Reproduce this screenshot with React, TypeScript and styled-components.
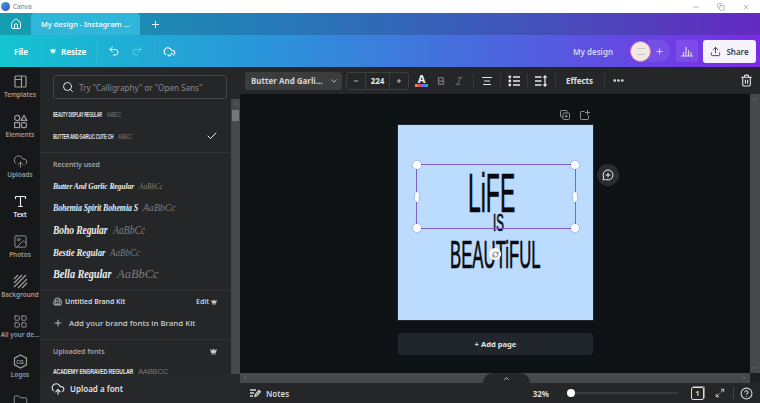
import React from "react";
import styled, { createGlobalStyle } from "styled-components";
import {
  Home, Plus, X, Undo2, Redo2, CloudCheck, Crown, Search, CloudUpload, Type,
  Image, LayoutGrid, MoreHorizontal, Trash2, Upload, Check, Minus, Copy, ChevronDown,
  ChevronUp, ChevronLeft, ChevronRight, Bold, Italic, AlignCenter, Maximize2, HelpCircle, Folder, Building2, RefreshCw,
  MessageCirclePlus,
} from "lucide-react";

const Global = createGlobalStyle`
  html, body { margin: 0; padding: 0; background: #fff; }
  * { box-sizing: border-box; }
  body { font-family: "Noto Sans", "Open Sans", sans-serif; width: 760px; height: 403px; overflow: hidden; }
`;

const Shell = styled.div`
  width: 760px; height: 403px; display: flex; flex-direction: column; overflow: hidden;
`;
const TitleBar = styled.div`
  height: 13px; background: #fff; display: flex; align-items: center; padding: 0 10px 0 1px; gap: 3px;
  font-size: 6.5px; color: #777;
`;
const AppDot = styled.span`
  width: 9px; height: 9px; border-radius: 50%;
  background: linear-gradient(135deg, #25b6d8, #5b3ad0);
`;
const WindowControls = styled.div`
  margin-left: auto; display: flex; align-items: center; gap: 17px; color: #999;
`;
const Header = styled.div`
  background: linear-gradient(90deg, #14c4d0 0%, #2a95da 35%, #4f62de 68%, #7d2ae8 100%);
`;
const TabRow = styled.div`
  height: 22px; display: flex; align-items: stretch; background: rgba(20, 40, 70, 0.24); color: #fff;
`;
const HomeTab = styled.div`
  width: 31px; display: flex; align-items: center; justify-content: center;
`;
const ActiveTab = styled.div`
  width: 109px; display: flex; align-items: center; justify-content: space-between; padding: 0 8px 0 10px;
  background: #2fb6d8; border-radius: 4px 4px 0 0; font-size: 7.4px; font-weight: 600; color: #e9fbff; white-space: nowrap;
`;
const NewTab = styled.div`
  width: 30px; display: flex; align-items: center; justify-content: center;
`;
const ActionRow = styled.div`
  height: 32px; display: flex; align-items: center; color: #fff; font-size: 8px; font-weight: 700;
`;
const FileLabel = styled.span`
  margin-left: 14px; width: 36px;
`;
const ResizeLabel = styled.span`
  display: flex; align-items: center; gap: 5px; width: 46px;
`;
const ActionDivider = styled.span<{ $after: number }>`
  width: 1px; height: 24px; background: rgba(255, 255, 255, 0.07); margin-right: ${(p) => p.$after}px;
`;
const HistoryButton = styled.span<{ $dim?: boolean }>`
  display: flex; margin-right: 11px; color: ${(p) => (p.$dim ? "rgba(255,255,255,.35)" : "#fff")};
`;
const DesignName = styled.span`
  margin-left: auto; margin-right: 17px; color: #d5d4f7; font-weight: 600; font-size: 8px;
`;
const Avatar = styled.span`
  width: 21px; height: 21px; border-radius: 50%; background: #efe9e6; border: 1.5px solid #f0739a;
  display: flex; align-items: center; justify-content: center; color: #bbb; position: relative; z-index: 1;
`;
const AvatarGlyph = styled.span`
  width: 8px; height: 7px; border-top: 1px solid #c9c4c2; border-bottom: 1px solid #c9c4c2;
`;
const AddMember = styled.span`
  width: 22px; height: 22px; margin-left: -3px; margin-right: 6px; border-radius: 0 50% 50% 0;
  background: rgba(255, 255, 255, 0.08); display: flex; align-items: center; justify-content: center; color: #eee;
`;
const Insights = styled.span`
  width: 22px; height: 22px; border-radius: 3px; background: rgba(255, 255, 255, 0.09); color: #ddd;
  display: flex; align-items: center; justify-content: center; margin-right: 5px;
`;
const ShareButton = styled.span`
  width: 53px; height: 23px; margin-right: 4px; border-radius: 3px; background: #f7f3fc; color: #3a3f48;
  display: flex; align-items: center; justify-content: center; gap: 5px; font-size: 8px; font-weight: 600;
`;
const Main = styled.div`
  flex: 1; display: flex; min-height: 0;
`;
const Rail = styled.div`
  width: 40px; background: #17181a; padding-top: 7px; display: flex; flex-direction: column; overflow: hidden; flex: none;
`;
const RailItem = styled.div<{ $active?: boolean }>`
  height: 40px; flex: none; display: flex; flex-direction: column; align-items: center; gap: 2px;
  color: ${(p) => (p.$active ? "#f0f0f0" : "#9c9d9f")};
  font-size: 6.4px; font-weight: 600; line-height: 8px; white-space: nowrap;
`;
const Panel = styled.div`
  width: 200px; flex: none; background: #252627; display: flex; flex-direction: column; position: relative; overflow: hidden;
`;
const SearchBox = styled.div`
  height: 24px; margin: 8px 13px 0; width: 174px; flex: none; border: 1px solid #45474a; border-radius: 3px;
  display: flex; align-items: center; gap: 5px; padding-left: 8px; color: #e8e8e8;
`;
const SearchHint = styled.span`
  color: #87888b; font-size: 8.1px; white-space: nowrap;
`;
const PanelBody = styled.div`
  flex: 1; display: flex; min-height: 0;
`;
const FontList = styled.div`
  flex: 1; min-width: 0; display: flex; flex-direction: column;
`;
const ScrollTrack = styled.div`
  width: 9px; flex: none; background: #47484a; display: flex; flex-direction: column; align-items: center;
  color: #8a8a8a; padding-top: 2px;
`;
const ScrollThumb = styled.div`
  width: 7px; height: 11px; background: #77787a; margin-top: 3px;
`;
const FontRow = styled.div<{ $h: number; $pt?: number; $pb?: number }>`
  height: ${(p) => p.$h}px; flex: none; display: flex; align-items: center; gap: 5px; padding: ${(p) => p.$pt ?? 0}px 14px ${(p) => p.$pb ?? 0}px 13px;
  white-space: nowrap;
`;
const Squeezed = styled.span<{ $w: number; $sx: number }>`
  display: inline-block; flex: none; width: ${(p) => p.$w}px; transform: scaleX(${(p) => p.$sx}); transform-origin: left center;
  white-space: nowrap;
`;
const CapsName = styled(Squeezed)<{ $size: number }>`
  font-family: "Liberation Sans", sans-serif; font-weight: 700; font-size: ${(p) => p.$size}px;
  letter-spacing: -0.25px; color: #e2e2e2;
`;
const CapsPreview = styled(CapsName)`
  color: #77787a; font-weight: 400;
`;
const ScriptName = styled(Squeezed)<{ $size: number }>`
  font-family: "Liberation Serif", serif; font-style: italic; font-weight: 700; font-size: ${(p) => p.$size}px;
  color: #ececec; letter-spacing: -0.1px;
`;
const ScriptPreview = styled(Squeezed)<{ $size: number }>`
  font-family: "Liberation Serif", serif; font-style: italic; font-size: ${(p) => p.$size}px; color: #7b7c7e;
`;
const CheckMark = styled.span`
  margin-left: auto; margin-right: -1px; display: flex; color: #eee;
`;
const Divider = styled.div`
  height: 1px; flex: none; background: #323335;
`;
const SectionRow = styled.div<{ $h: number }>`
  height: ${(p) => p.$h}px; flex: none; display: flex; align-items: center; gap: 3px; padding: 0 14px 0 13px;
  font-size: 6.9px; font-weight: 600; color: #a4a5a7;
`;
const BrandTitle = styled.span`
  color: #dcdcdc;
`;
const EditLabel = styled.span`
  margin-left: auto; display: flex; align-items: center; gap: 2px; color: #cfcfcf;
`;
const AddRow = styled.div`
  height: 27px; flex: none; display: flex; align-items: center; gap: 6px; padding: 0 0 5px 13px; font-size: 7.9px;
  font-weight: 500; color: #cfd0d1; white-space: nowrap;
`;
const UploadBar = styled.div`
  position: absolute; left: 0; right: 0; bottom: 0; height: 29px; background: #27282a; display: flex;
  align-items: center; gap: 5px; padding-left: 11px; color: #e2e2e2; font-size: 8px; font-weight: 600;
`;
const Editor = styled.div`
  flex: 1; min-width: 0; display: flex; flex-direction: column; background: #0e1215;
`;
const FormatBar = styled.div`
  height: 27px; flex: none; background: #252627; display: flex; align-items: center; padding: 0 7px 0 5px; color: #e6e6e6;
`;
const FontPicker = styled.div`
  width: 97px; height: 18px; background: #3b3c3e; border-radius: 3px; display: flex; align-items: center;
  justify-content: space-between; padding: 0 3px 0 6px; font-size: 8px; font-weight: 700; color: #d5d5d5;
`;
const SizeStepper = styled.div`
  margin-left: 4px; width: 63px; height: 18px; border: 1px solid #3d3e40; border-radius: 3px; display: grid;
  grid-template-columns: 18px 1fr 18px; font-size: 8px; font-weight: 700;
`;
const StepCell = styled.span<{ $mid?: boolean }>`
  display: flex; align-items: center; justify-content: center;
  ${(p) => p.$mid && "border-left: 1px solid #3d3e40; border-right: 1px solid #3d3e40;"}
`;
const ColorA = styled.span`
  margin-left: 6px; width: 13px; display: flex; flex-direction: column; align-items: center;
  font-size: 11px; font-weight: 700; line-height: 10px; color: #f2f2f2;
`;
const Rainbow = styled.span`
  width: 13px; height: 3px; border-radius: 1px;
  background: linear-gradient(90deg, #f0c02c, #e5484d, #a64de0, #3b82f6, #2ecc71);
`;
const Tool = styled.span<{ $dim?: boolean; $ml: number }>`
  display: flex; margin-left: ${(p) => p.$ml}px; color: ${(p) => (p.$dim ? "#77787a" : "#e6e6e6")};
`;
const FormatDivider = styled.span<{ $ml: number }>`
  width: 1px; height: 14px; background: #37383a; margin-left: ${(p) => p.$ml}px;
`;
const EffectsLabel = styled.span`
  margin-left: 10px; width: 27px; font-size: 8px; font-weight: 700; color: #e0e0e0; white-space: nowrap;
`;
const TrashButton = styled.span`
  margin-left: auto; display: flex;
`;
const CanvasRow = styled.div`
  flex: 1; min-height: 0; display: flex;
`;
const CanvasArea = styled.div`
  flex: 1; min-width: 0; display: flex; flex-direction: column; align-items: flex-start; padding-left: 158px; position: relative;
`;
const PageActions = styled.div`
  height: 31px; width: 195px; flex: none; display: flex; justify-content: flex-end; align-items: flex-start;
  gap: 10px; padding: 16px 3px 0 0; color: #8d8f92;
`;
const DesignPage = styled.div`
  width: 195px; height: 195px; flex: none; background: #bcdcff; position: relative; outline: 1px solid #24272b;
`;
const Lettering = styled.div<{ $x: number; $y: number; $size: number; $sx: number }>`
  position: absolute; left: ${(p) => p.$x}px; top: ${(p) => p.$y}px; font-size: ${(p) => p.$size}px;
  line-height: 0.75; color: #0a0a0e; font-family: "Liberation Sans", sans-serif; font-weight: 400; white-space: nowrap;
  -webkit-text-stroke: 0.7px #0a0a0e;
  transform: scaleX(${(p) => p.$sx}); transform-origin: left top;
`;
const Selection = styled.div`
  position: absolute; left: 18px; top: 39px; width: 160px; height: 65px; border: 1.5px solid #8261cf;
`;
const Handle = styled.span<{ $x: string; $y: string; $bar?: boolean }>`
  position: absolute; left: ${(p) => p.$x}; top: ${(p) => p.$y}; transform: translate(-50%, -50%);
  width: ${(p) => (p.$bar ? "4px" : "8px")}; height: ${(p) => (p.$bar ? "10px" : "8px")};
  border-radius: ${(p) => (p.$bar ? "2px" : "50%")}; background: #fff; box-shadow: 0 0 2px rgba(0, 0, 0, 0.35);
`;
const MoveHandle = styled.span`
  position: absolute; left: 97px; top: 129px; transform: translate(-50%, -50%); width: 12px; height: 12px;
  border-radius: 50%; background: #fff; display: flex; align-items: center; justify-content: center; color: #444;
`;
const RefreshBubble = styled.span`
  position: absolute; left: 357px; top: 70px; width: 22px; height: 22px; border-radius: 50%; background: #2b2c2e;
  display: flex; align-items: center; justify-content: center; color: #f0f0f0;
`;
const AddPage = styled.div`
  margin-top: 13px; width: 195px; height: 22px; flex: none; background: #20262b; border-radius: 3px; display: flex;
  align-items: center; justify-content: center; color: #e2e2e2; font-size: 7.6px; font-weight: 700;
`;
const VerticalTrack = styled.div`
  width: 10px; flex: none; background: #47484a; display: flex; justify-content: space-between; flex-direction: column;
  align-items: center; padding: 2px 0; color: #8c8c8c;
`;
const HorizontalTrack = styled.div`
  height: 10px; flex: none; background: #47484a; position: relative; display: flex; align-items: center;
  justify-content: space-between; color: #8c8c8c; padding-left: 2px;
`;
const TrackEnd = styled.span`
  display: flex; align-items: center; gap: 3px;
`;
const TrackCorner = styled.span`
  width: 10px; height: 10px; background: #1e1f21;
`;
const DrawerTab = styled.span`
  position: absolute; left: 243px; top: 0; width: 47px; height: 10px; background: #252627; border-radius: 10px 10px 0 0;
  display: flex; justify-content: center; color: #ddd; align-items: center;
`;
const Footer = styled.div`
  height: 20px; flex: none; background: #252627; display: flex; align-items: center; padding: 0 7px 0 9px; color: #d8d8d8;
  font-size: 8px; font-weight: 600;
`;
const NotesLabel = styled.span`
  display: flex; align-items: center; gap: 5px;
`;
const Zoom = styled.span`
  margin-left: auto; margin-right: 18px; font-weight: 700;
`;
const Slider = styled.span`
  width: 111px; height: 2px; background: #3a3b3d; position: relative; margin-right: 13px;
`;
const SliderKnob = styled.span`
  position: absolute; left: 0; top: -3px; width: 8px; height: 8px; background: #fff; border-radius: 50%;
`;
const PageCount = styled.span`
  width: 13px; height: 13px; border: 1.5px solid #ddd; border-radius: 2px; font-size: 7px; font-weight: 700;
  display: flex; align-items: center; justify-content: center; margin-right: 11px; box-shadow: 1px -1px 0 #8a8a8a;
`;
const FooterDivider = styled.span`
  width: 1px; height: 12px; background: #444; margin: 0 6px 0 8px;
`;

function TemplatesIcon() {
  return (
    <svg width="15" height="15" viewBox="0 0 15 15" fill="none" stroke="currentColor" strokeWidth="1.2">
      <rect x="2" y="2" width="11" height="11" rx="1" />
      <path d="M8.5 2v11M2 5.5h6.5" />
    </svg>
  );
}
function ElementsIcon() {
  return (
    <svg width="15" height="15" viewBox="0 0 15 15" fill="none" stroke="currentColor" strokeWidth="1.2">
      <circle cx="4.2" cy="4" r="2.6" />
      <path d="M11 1.4 13.8 6.4H8.2Z" />
      <rect x="1.6" y="8.6" width="5" height="5" />
      <rect x="8.4" y="8.6" width="5" height="5" rx="1.6" />
    </svg>
  );
}
function Hatch() {
  return (
    <svg width="15" height="15" viewBox="0 0 15 15" stroke="currentColor" strokeWidth="1.2">
      <path d="M1 5 5 1M1 9l8-8M1 13 13 1M5 14l9-9M9 14l5-5" />
    </svg>
  );
}
function LogoBadge() {
  return (
    <svg width="15" height="15" viewBox="0 0 15 15" fill="none" stroke="currentColor" strokeWidth="1.2">
      <path d="M7.5 1 13.5 4.2v6.6L7.5 14 1.5 10.8V4.2Z" />
      <text x="7.5" y="9.5" fontSize="5" textAnchor="middle" fill="currentColor" stroke="none" fontWeight="700">CO.</text>
    </svg>
  );
}
function BarsIcon() {
  return (
    <svg width="12" height="12" viewBox="0 0 12 12" stroke="currentColor" strokeWidth="1.1">
      <path d="M0 11h12M2.5 11V7M5 11V2M7.5 11V5M10 11V7" />
    </svg>
  );
}
function NotesIcon() {
  return (
    <svg width="12" height="10" viewBox="0 0 12 10" fill="none" stroke="currentColor" strokeWidth="1.3">
      <path d="M1 2h6M1 5h4M1 8h3M6 8.2l.5-2L10 2.5 11.3 3.8 7.8 7.6Z" />
    </svg>
  );
}
function BulletsIcon() {
  return (
    <svg width="12" height="12" viewBox="0 0 12 12" fill="currentColor">
      <circle cx="1.8" cy="2" r="1.4" /><circle cx="1.8" cy="6" r="1.4" /><circle cx="1.8" cy="10" r="1.4" />
      <path d="M5 1.2h7v1.5H5zM5 5.2h7v1.5H5zM5 9.2h7v1.5H5z" />
    </svg>
  );
}
function SpacingIcon() {
  return (
    <svg width="12" height="12" viewBox="0 0 12 12" fill="none" stroke="currentColor" strokeWidth="1.3">
      <path d="M0 2h6.5M0 6h6.5M0 10h6.5M10 1v10M8.4 2.6 10 1l1.6 1.6M8.4 9.4 10 11l1.6-1.6" />
    </svg>
  );
}
function DuplicateIcon() {
  return (
    <svg width="10" height="10" viewBox="0 0 10 10" fill="none" stroke="currentColor" strokeWidth="1">
      <path d="M2.6 7H1.2A.7.7 0 0 1 .5 6.3V1.2A.7.7 0 0 1 1.2.5h5.1a.7.7 0 0 1 .7.7v1.4" />
      <rect x="3" y="3" width="6.5" height="6.5" rx=".8" />
      <path d="M6.2 4.6v3.2M4.6 6.2h3.2" />
    </svg>
  );
}
function AddPageIcon() {
  return (
    <svg width="10" height="10" viewBox="0 0 10 10" fill="none" stroke="currentColor" strokeWidth="1">
      <path d="M4.5 1.5H1.2a.7.7 0 0 0-.7.7v6.6a.7.7 0 0 0 .7.7h6.6a.7.7 0 0 0 .7-.7V5.5" />
      <path d="M7.5 0v5M5 2.5h5" />
    </svg>
  );
}

const rail = [
  { label: "Templates", icon: <TemplatesIcon /> },
  { label: "Elements", icon: <ElementsIcon /> },
  { label: "Uploads", icon: <CloudUpload size={15} strokeWidth={1.4} /> },
  { label: "Text", icon: <Type size={15} strokeWidth={1.8} />, active: true },
  { label: "Photos", icon: <Image size={15} strokeWidth={1.4} /> },
  { label: "Background", icon: <Hatch /> },
  { label: "All your de...", icon: <LayoutGrid size={15} strokeWidth={1.4} /> },
  { label: "Logos", icon: <LogoBadge /> },
  { label: "", icon: <Folder size={15} strokeWidth={1.4} /> },
];

export default function App() {
  return (
    <Shell>
      <Global />
      <TitleBar>
        <AppDot />
        Canva
        <WindowControls>
          <Minus size={8} />
          <Copy size={8} />
          <X size={8} />
        </WindowControls>
      </TitleBar>
      <Header>
        <TabRow>
          <HomeTab><Home size={12} /></HomeTab>
          <ActiveTab>
            My design - Instagram ...
            <X size={7} color="#a9e4ef" />
          </ActiveTab>
          <NewTab><Plus size={11} strokeWidth={2} /></NewTab>
        </TabRow>
        <ActionRow>
          <FileLabel>File</FileLabel>
          <ResizeLabel><Crown size={6} fill="#fff" />Resize</ResizeLabel>
          <ActionDivider $after={11} />
          <HistoryButton><Undo2 size={12} /></HistoryButton>
          <HistoryButton $dim><Redo2 size={12} /></HistoryButton>
          <ActionDivider $after={8} />
          <HistoryButton><CloudCheck size={13} /></HistoryButton>
          <DesignName>My design</DesignName>
          <Avatar><AvatarGlyph /></Avatar>
          <AddMember><Plus size={9} /></AddMember>
          <Insights><BarsIcon /></Insights>
          <ShareButton><Upload size={11} />Share</ShareButton>
        </ActionRow>
      </Header>
      <Main>
        <Rail>
          {rail.map((r) => (
            <RailItem key={r.label} $active={r.active}>
              {r.icon}
              <span>{r.label}</span>
            </RailItem>
          ))}
        </Rail>
        <Panel>
          <SearchBox>
            <Search size={12} strokeWidth={2} />
            <SearchHint>Try "Calligraphy" or "Open Sans"</SearchHint>
          </SearchBox>
          <PanelBody>
            <FontList>
              <FontRow $h={24} $pt={6}>
                <CapsName $size={6.5} $w={49} $sx={0.58}>BEAUTY DISPLAY REGULAR</CapsName>
                <CapsPreview $size={6.5} $w={15} $sx={0.55}>AABBCC</CapsPreview>
              </FontRow>
              <FontRow $h={29} $pb={3}>
                <CapsName $size={8} $w={60} $sx={0.52}>BUTTER AND GARLIC CUTE CH</CapsName>
                <CapsPreview $size={8} $w={15} $sx={0.45}>AABBCC</CapsPreview>
                <CheckMark><Check size={12} /></CheckMark>
              </FontRow>
              <Divider />
              <SectionRow $h={22}>Recently used</SectionRow>
              <FontRow $h={21}>
                <ScriptName $size={9} $w={81} $sx={0.84}>Butter And Garlic Regular</ScriptName>
                <ScriptPreview $size={9} $w={24} $sx={0.8}>AaBbCc</ScriptPreview>
              </FontRow>
              <FontRow $h={22}>
                <ScriptName $size={10.5} $w={85} $sx={0.75}>Bohemia Spirit Bohemia S</ScriptName>
                <ScriptPreview $size={11} $w={32} $sx={0.89}>AaBbCc</ScriptPreview>
              </FontRow>
              <FontRow $h={23}>
                <ScriptName $size={11.5} $w={55} $sx={0.83}>Boho Regular</ScriptName>
                <ScriptPreview $size={11.5} $w={32} $sx={0.84}>AaBbCc</ScriptPreview>
              </FontRow>
              <FontRow $h={22}>
                <ScriptName $size={10} $w={52} $sx={0.88}>Bestie Regular</ScriptName>
                <ScriptPreview $size={10} $w={30} $sx={0.9}>AaBbCc</ScriptPreview>
              </FontRow>
              <FontRow $h={27} $pb={5}>
                <ScriptName $size={11.5} $w={59} $sx={0.9}>Bella Regular</ScriptName>
                <ScriptPreview $size={12.5} $w={42} $sx={1}>AaBbCc</ScriptPreview>
              </FontRow>
              <Divider />
              <SectionRow $h={21}>
                <Building2 size={9} color="#ccc" />
                <BrandTitle>Untitled Brand Kit</BrandTitle>
                <EditLabel>Edit <Crown size={6} fill="#cfcfcf" /></EditLabel>
              </SectionRow>
              <AddRow><Plus size={10} />Add your brand fonts in Brand Kit</AddRow>
              <Divider />
              <SectionRow $h={22}>
                Uploaded fonts
                <EditLabel><Crown size={7} fill="#cfcfcf" /></EditLabel>
              </SectionRow>
              <FontRow $h={18}>
                <CapsName $size={7} $w={80} $sx={0.75}>ACADEMY ENGRAVED REGULAR</CapsName>
                <CapsPreview $size={7} $w={33} $sx={1.1}>AABBCC</CapsPreview>
              </FontRow>
            </FontList>
            <ScrollTrack>
              <ChevronUp size={6} />
              <ScrollThumb />
            </ScrollTrack>
          </PanelBody>
          <UploadBar><CloudUpload size={14} />Upload a font</UploadBar>
        </Panel>
        <Editor>
          <FormatBar>
            <FontPicker>Butter And Garli...<ChevronDown size={10} /></FontPicker>
            <SizeStepper>
              <StepCell><Minus size={6} strokeWidth={3} /></StepCell>
              <StepCell $mid>224</StepCell>
              <StepCell><Plus size={6} strokeWidth={3} /></StepCell>
            </SizeStepper>
            <ColorA>A<Rainbow /></ColorA>
            <Tool $dim $ml={8}><Bold size={10} strokeWidth={3} /></Tool>
            <Tool $dim $ml={8}><Italic size={10} /></Tool>
            <FormatDivider $ml={9} />
            <Tool $ml={7}><AlignCenter size={12} strokeWidth={2.2} /></Tool>
            <FormatDivider $ml={7} />
            <Tool $ml={7}><BulletsIcon /></Tool>
            <FormatDivider $ml={7} />
            <Tool $ml={7}><SpacingIcon /></Tool>
            <FormatDivider $ml={8} />
            <EffectsLabel>Effects</EffectsLabel>
            <FormatDivider $ml={11} />
            <Tool $ml={7}><MoreHorizontal size={13} strokeWidth={3} /></Tool>
            <TrashButton><Trash2 size={13} /></TrashButton>
          </FormatBar>
          <CanvasRow>
            <CanvasArea>
              <PageActions>
                <DuplicateIcon />
                <AddPageIcon />
              </PageActions>
              <DesignPage>
                <Lettering $x={70} $y={47} $size={56} $sx={0.41}>LiFE</Lettering>
                <Lettering $x={95} $y={90} $size={23} $sx={0.5}>IS</Lettering>
                <Lettering $x={52} $y={115} $size={39} $sx={0.43}>BEAUTiFUL</Lettering>
                <Selection>
                  <Handle $x="0" $y="0" />
                  <Handle $x="100%" $y="0" />
                  <Handle $x="0" $y="100%" />
                  <Handle $x="100%" $y="100%" />
                  <Handle $x="0" $y="50%" $bar />
                  <Handle $x="100%" $y="50%" $bar />
                </Selection>
                <MoveHandle><RefreshCw size={7} /></MoveHandle>
              </DesignPage>
              <RefreshBubble><MessageCirclePlus size={12} /></RefreshBubble>
              <AddPage>+ Add page</AddPage>
            </CanvasArea>
            <VerticalTrack>
              <ChevronUp size={6} />
              <ChevronDown size={6} />
            </VerticalTrack>
          </CanvasRow>
          <HorizontalTrack>
            <ChevronLeft size={6} />
            <DrawerTab><ChevronUp size={7} strokeWidth={3} /></DrawerTab>
            <TrackEnd><ChevronRight size={6} /><TrackCorner /></TrackEnd>
          </HorizontalTrack>
          <Footer>
            <NotesLabel><NotesIcon />Notes</NotesLabel>
            <Zoom>32%</Zoom>
            <Slider><SliderKnob /></Slider>
            <PageCount>1</PageCount>
            <Maximize2 size={10} />
            <FooterDivider />
            <HelpCircle size={13} />
          </Footer>
        </Editor>
      </Main>
    </Shell>
  );
}
